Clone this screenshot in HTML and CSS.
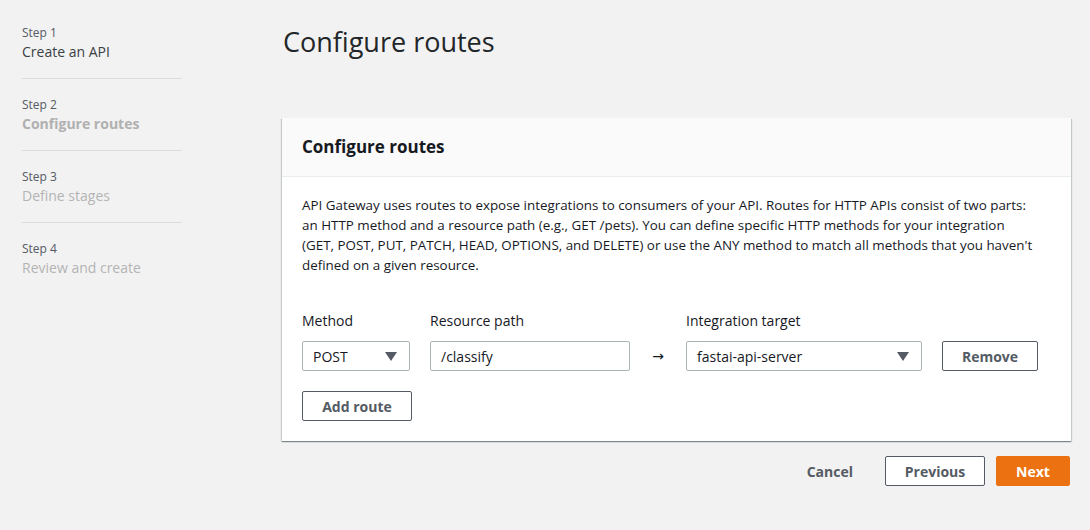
FILE: index.html
```html
<!DOCTYPE html>
<html>
<head>
<meta charset="utf-8">
<link rel="stylesheet" href="styles.css">
</head>
<body>
<div class="page">
  <nav class="steps">
    <div class="step">
      <div class="step-label">Step 1</div>
      <div class="step-title done">Create an API</div>
    </div>
    <div class="step">
      <div class="step-label">Step 2</div>
      <div class="step-title current">Configure routes</div>
    </div>
    <div class="step">
      <div class="step-label">Step 3</div>
      <div class="step-title">Define stages</div>
    </div>
    <div class="step">
      <div class="step-label">Step 4</div>
      <div class="step-title">Review and create</div>
    </div>
  </nav>
  <main class="main">
    <h1 class="page-title">Configure routes</h1>
    <section class="card">
      <header class="card-header">Configure routes</header>
      <div class="card-body">
        <p class="desc">API Gateway uses routes to expose integrations to consumers of your API. Routes for HTTP APIs consist of two parts:<br>an HTTP method and a resource path (e.g., GET /pets). You can define specific HTTP methods for your integration<br>(GET, POST, PUT, PATCH, HEAD, OPTIONS, and DELETE) or use the ANY method to match all methods that you haven't<br>defined on a given resource.</p>
        <div class="routes">
          <div class="lbl c-method">Method</div>
          <div class="lbl c-path">Resource path</div>
          <div class="lbl c-target">Integration target</div>
          <div class="field select c-method"><span>POST</span><span class="caret"></span></div>
          <div class="field c-path"><span>/classify</span></div>
          <div class="arrow c-arrow">→</div>
          <div class="field select c-target"><span>fastai-api-server</span><span class="caret"></span></div>
          <button class="btn c-remove">Remove</button>
        </div>
        <button class="btn add">Add route</button>
      </div>
    </section>
    <div class="actions">
      <button class="btn link">Cancel</button>
      <button class="btn prev">Previous</button>
      <button class="btn primary">Next</button>
    </div>
  </main>
</div>
</body>
</html>
```
FILE: styles.css
```css
* { box-sizing: border-box; }
html, body { margin: 0; padding: 0; }
body {
  background: #f2f2f2;
  font-family: "Open Sans", "Noto Sans", sans-serif;
  color: #16191f;
  font-size: 14px;
  width: 1090px;
  height: 530px;
  overflow: hidden;
}
.page { display: flex; }
.steps {
  width: 282px;
  padding: 7px 0 0 22px;
  flex-shrink: 0;
}
.step {
  width: 160px;
  padding: 17px 0 16px;
  border-bottom: 1px solid #dcdcdc;
}
.step:last-child { border-bottom: none; }
.step-label {
  font-size: 12px;
  line-height: 18px;
  color: #545b64;
}
.step-title {
  font-size: 14px;
  line-height: 20px;
  color: #b4b4b4;
}
.step-title.done { color: #3a3f45; }
.step-title.current { font-weight: 700; color: #b0b0b0; }

.main {
  width: 789px;
  padding-top: 24px;
}
.page-title {
  margin: 0 0 58px 1px;
  font-size: 27px;
  line-height: 36px;
  font-weight: 400;
  color: #232629;
}
.card {
  background: #fff;
  box-shadow: 0 1px 1px 0 rgba(0,28,36,.3), 1px 1px 1px 0 rgba(0,28,36,.15), -1px 1px 1px 0 rgba(0,28,36,.15);
}
.card-header {
  background: #fafafa;
  border-bottom: 1px solid #eaeded;
  padding: 17px 20px;
  font-size: 17px;
  line-height: 24px;
  font-weight: 700;
  color: #16191f;
}
.card-body { padding: 18px 20px 20px; }
.desc {
  margin: 0 0 36px;
  line-height: 20px;
  color: #16191f;
  white-space: nowrap;
  font-size: 13.4px;
}
.routes {
  display: grid;
  grid-template-columns: 108px 20px 200px 56px 236px 20px 96px;
  grid-template-rows: 20px 30px;
  row-gap: 10px;
}
.lbl { line-height: 20px; color: #16191f; }
.c-method { grid-column: 1; }
.c-path { grid-column: 3; }
.c-arrow { grid-column: 4; }
.c-target { grid-column: 5; }
.c-remove { grid-column: 7; }
.field {
  height: 30px;
  border: 1px solid #aab7b8;
  border-radius: 2px;
  padding: 0 10px;
  display: flex;
  align-items: center;
  justify-content: space-between;
  color: #16191f;
  background: #fff;
}
.caret {
  width: 0; height: 0;
  border-left: 6px solid transparent;
  border-right: 6px solid transparent;
  border-top: 9px solid #545b64;
  margin-right: 2px;
}
.arrow {
  display: flex;
  align-items: center;
  justify-content: center;
  color: #16191f;
  font-family: "DejaVu Sans", sans-serif;
  font-size: 14px;
  padding-bottom: 1px;
}
.btn {
  font-family: inherit;
  font-size: 14px;
  font-weight: 700;
  color: #545b64;
  background: #fff;
  border: 1px solid #545b64;
  border-radius: 2px;
  height: 30px;
  padding: 0 10px;
  white-space: nowrap;
  cursor: pointer;
}
.c-remove { width: 96px; }
.add { margin-top: 20px; width: 110px; }
.actions {
  display: flex;
  justify-content: flex-end;
  gap: 11px;
  margin-top: 15px;
  margin-right: 1px;
}
.link { background: transparent; border-color: transparent; padding: 0 20px; }
.prev { width: 100px; }
.primary {
  width: 74px;
  background: #ec7211;
  border-color: #ec7211;
  color: #fff;
}
```
